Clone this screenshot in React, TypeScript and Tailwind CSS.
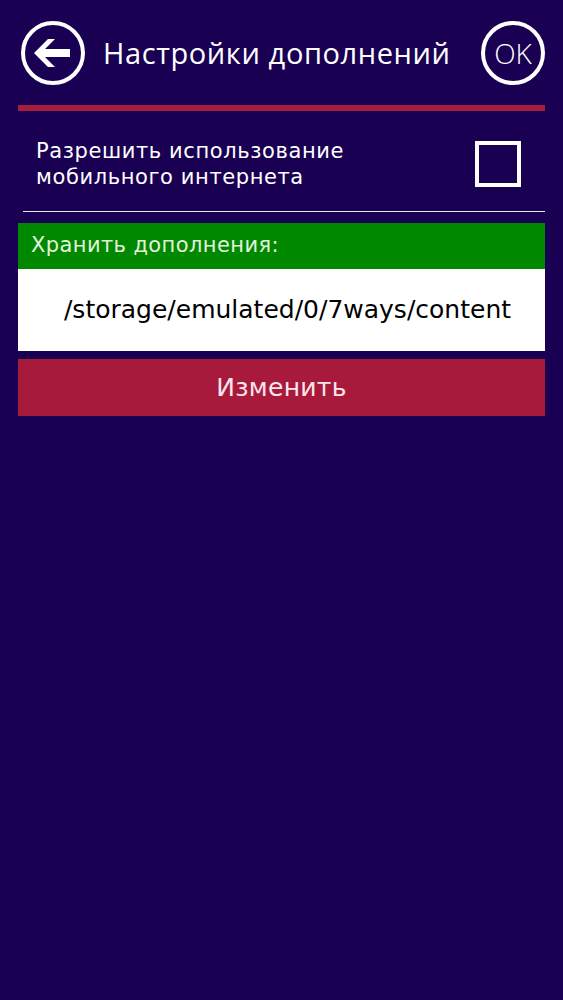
import React from 'react'

function BackIcon() {
  return (
    <svg width="66" height="66" viewBox="0 0 66 66" fill="none">
      <circle cx="33" cy="33" r="30" stroke="white" strokeWidth="4" />
      <path d="M14 33 L28 19 L35 19 L25 29 L50 29 L50 37 L25 37 L35 47 L28 47 Z" fill="white" />
    </svg>
  )
}

export default function App() {
  return (
    <div className="min-h-[1000px] w-full bg-[#1a0053] px-[18px] pt-[20px] font-['DejaVu_Sans',sans-serif]">
      <header className="flex h-[66px] items-center justify-between">
        <div className="flex items-center">
          <div className="ml-[2px]">
            <BackIcon />
          </div>
          <h1 className="ml-[17px] font-['Open_Sans',sans-serif] text-[29px] tracking-[0.6px] text-white">
            Настройки дополнений
          </h1>
        </div>
        <div className="flex h-[64px] w-[64px] items-center justify-center rounded-full border-[4px] border-white">
          <span className="font-['Open_Sans',sans-serif] text-[28px] font-light text-white">OK</span>
        </div>
      </header>

      <div className="mt-[19px] h-[6px] bg-[#a81c3e]" />

      <div className="flex items-center justify-between pt-[27px] pl-[18px] pr-[24px]">
        <p className="text-[21px] leading-[26px] tracking-[0.6px] text-white">
          Разрешить использование
          <br />
          мобильного интернета
        </p>
        <div className="h-[46px] w-[46px] border-[4px] border-white" />
      </div>

      <div className="mt-[21px] ml-[5px] h-px bg-[#e6e0f0]" />

      <div className="mt-[11px]">
        <div className="flex h-[46px] items-center bg-[#008800] px-[13px] text-[21px] tracking-[0.4px] text-[#e2f3da]">
          Хранить дополнения:
        </div>
        <div className="flex h-[82px] items-center justify-center bg-white pl-[12px] text-[25px] text-black">
          /storage/emulated/0/7ways/content
        </div>
      </div>

      <button className="mt-[8px] flex h-[57px] w-full items-center justify-center bg-[#a81a3c] text-[25px] tracking-[0.3px] text-[#f8e6ee]">
        Изменить
      </button>
    </div>
  )
}
